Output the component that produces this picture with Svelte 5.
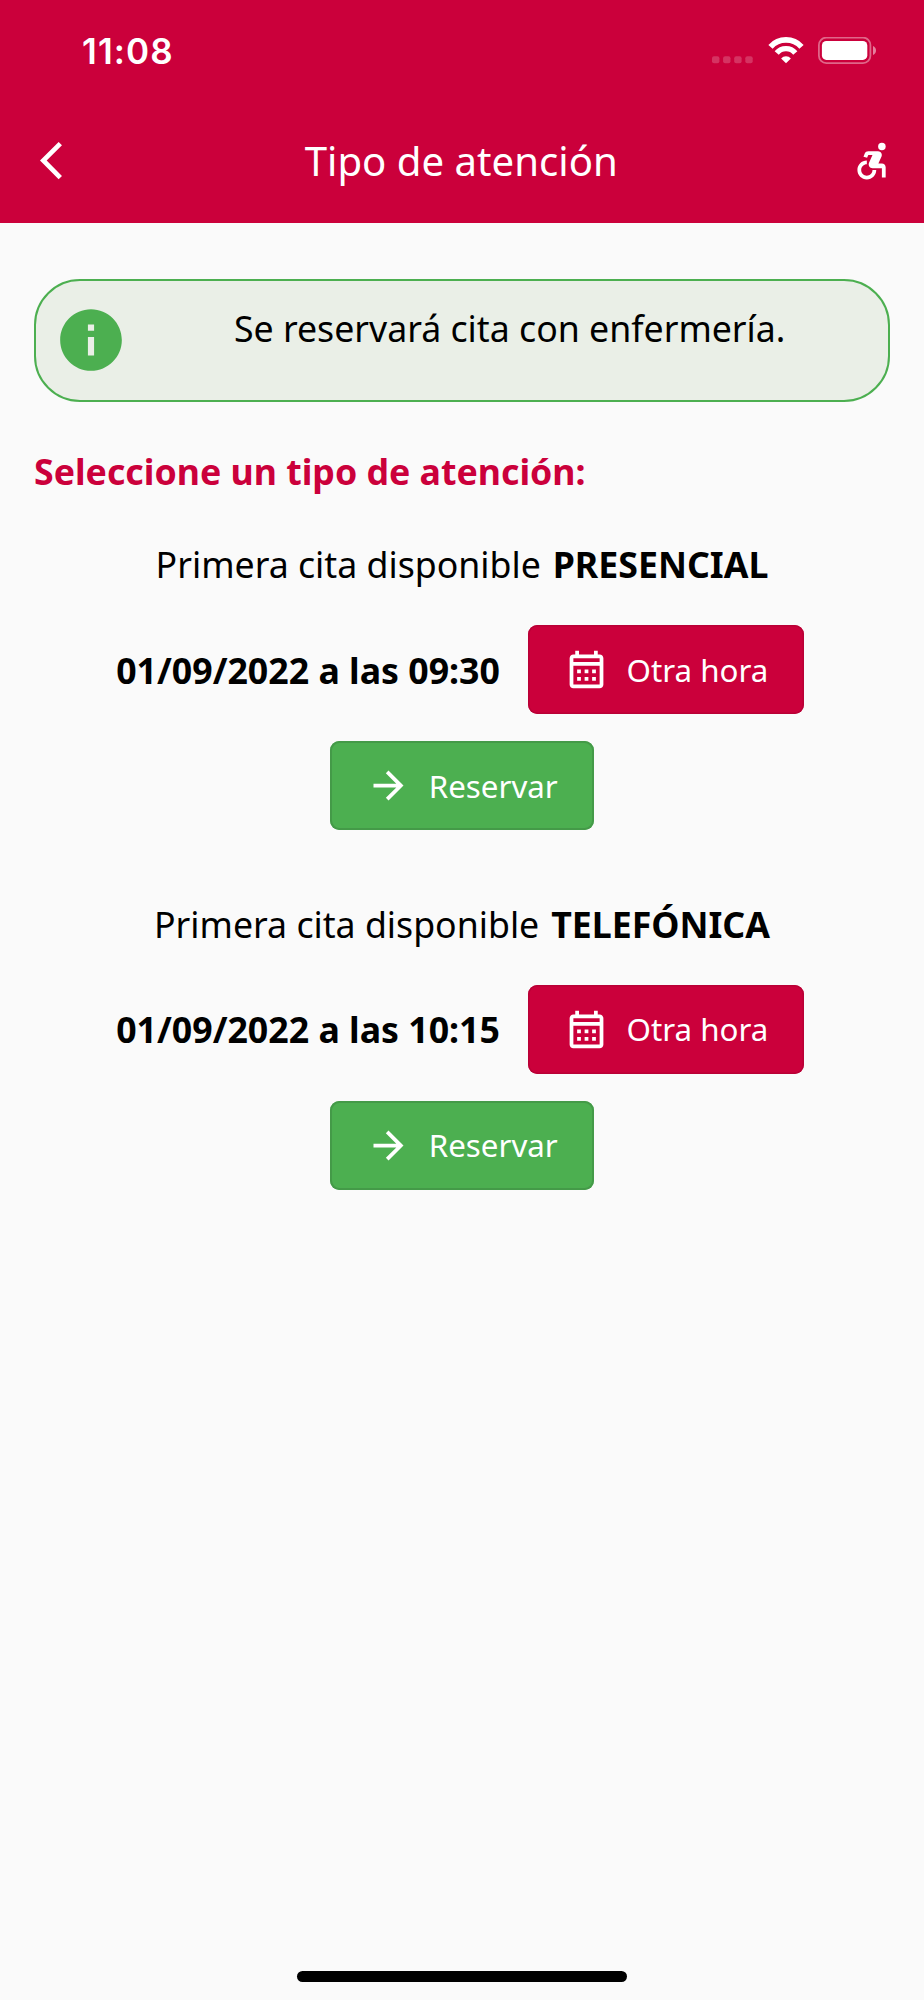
<script lang="ts">
  interface Appointment {
    type: string;
    date: string;
  }

  const appointments: Appointment[] = [
    { type: 'PRESENCIAL', date: '01/09/2022 a las 09:30' },
    { type: 'TELEFÓNICA', date: '01/09/2022 a las 10:15' }
  ];
</script>

<div class="screen">
  <header>
    <div class="status-bar">
      <span class="time">11:08</span>
      <div class="status-icons">
        <svg class="signal" width="41" height="8" viewBox="0 0 41 8" fill="#fff" fill-opacity="0.2">
          <rect x="0" y="0.2" width="7.4" height="7" rx="2" />
          <rect x="11.1" y="0.2" width="7.4" height="7" rx="2" />
          <rect x="22.2" y="0.2" width="7.4" height="7" rx="2" />
          <rect x="33.3" y="0.2" width="7.4" height="7" rx="2" />
        </svg>
        <svg class="wifi" width="36" height="27" viewBox="0 0 36 27" fill="none" stroke="#fff">
          <path d="M2.5 9.8a20.8 20.8 0 0 1 31 0" stroke-width="5.7" />
          <path d="M8.7 15.9a12.2 12.2 0 0 1 18.6 0" stroke-width="5.4" />
          <path d="M18 26.3l-4.9-4.9a6.9 6.9 0 0 1 9.8 0z" fill="#fff" stroke="none" />
        </svg>
        <svg class="battery" width="59" height="28" viewBox="0 0 59 28">
          <rect x="0.9" y="0.6" width="51.5" height="25.5" rx="7.4" fill="none" stroke="#fff" stroke-opacity="0.4" stroke-width="1.8" />
          <rect x="3.9" y="3.9" width="45.4" height="19" rx="4.5" fill="#fff" />
          <path d="M55 8.9v9c1.8-.7 3-2.5 3-4.5s-1.2-3.8-3-4.5z" fill="#fff" fill-opacity="0.5" />
        </svg>
      </div>
    </div>
    <nav class="toolbar">
      <button class="icon-button" aria-label="Volver">
        <svg width="45.2" height="45.2" viewBox="0 0 24 24" fill="currentColor">
          <path d="M11.67 3.87L9.9 2.1 0 12l9.9 9.9 1.77-1.77L3.54 12z" />
        </svg>
      </button>
      <h1>Tipo de atención</h1>
      <button class="icon-button" aria-label="Accesibilidad">
        <svg width="45.2" height="45.2" viewBox="0 0 24 24" fill="currentColor">
          <circle cx="18" cy="4.54" r="2" />
          <path d="M15 17h-2c0 1.65-1.35 3-3 3s-3-1.35-3-3 1.35-3 3-3v-2c-2.76 0-5 2.24-5 5s2.24 5 5 5 5-2.24 5-5zm3-3.5h-1.86l1.67-3.67C18.42 8.5 17.44 7 15.96 7h-5.2c-.81 0-1.54.47-1.87 1.2L8.22 10l1.92.53.65-1.53H13l-1.83 4.1c-.6 1.33.39 2.9 1.85 2.9H18v5h2v-5.5c0-1.1-.9-2-2-2z" />
        </svg>
      </button>
    </nav>
  </header>

  <main>
    <div class="notice">
      <svg width="74" height="74" viewBox="0 0 24 24" fill="currentColor">
        <path d="M12 2C6.48 2 2 6.48 2 12s4.48 10 10 10 10-4.48 10-10S17.52 2 12 2zm1 15h-2v-6h2v6zm0-8h-2V7h2v2z" />
      </svg>
      <p>Se reservará cita con enfermería.</p>
    </div>

    <h2>Seleccione un tipo de atención:</h2>

    {#each appointments as { type, date }}
      <section class="appointment">
        <p class="available">Primera cita disponible <strong>{type}</strong></p>
        <div class="slot">
          <strong>{date}</strong>
          <button class="button other">
            <svg width="45" height="45" viewBox="0 0 24 24" fill="currentColor">
              <path d="M19 4h-1V2h-2v2H8V2H6v2H5c-1.11 0-1.99.9-1.99 2L3 20c0 1.1.89 2 2 2h14c1.1 0 2-.9 2-2V6c0-1.1-.9-2-2-2zm0 16H5V10h14v10zm0-12H5V6h14v2zM9 14H7v-2h2v2zm4 0h-2v-2h2v2zm4 0h-2v-2h2v2zm-8 4H7v-2h2v2zm4 0h-2v-2h2v2zm4 0h-2v-2h2v2z" />
            </svg>
            <span>Otra hora</span>
          </button>
        </div>
        <button class="button book">
          <svg width="45" height="45" viewBox="0 0 24 24" fill="currentColor">
            <path d="M12 4l-1.41 1.41L16.17 11H4v2h12.17l-5.58 5.59L12 20l8-8z" />
          </svg>
          <span>Reservar</span>
        </button>
      </section>
    {/each}
  </main>

  <div class="home-indicator"></div>
</div>

<style>
  :global(body) {
    margin: 0;
    background: #fafafa;
  }

  .screen {
    display: flex;
    flex-direction: column;
    box-sizing: border-box;
    width: 924px;
    height: 2000px;
    background: #fafafa;
    color: #000;
    font-family: 'Noto Sans', sans-serif;
    font-size: 35.7px;
    line-height: 48px;
  }

  h1,
  h2,
  p {
    margin: 0;
  }

  svg {
    display: block;
    flex: none;
  }

  button {
    border: 0;
    padding: 0;
    color: #fff;
    font: inherit;
  }

  header {
    height: 223.4px;
    background: #cb003b;
    color: #fff;
  }

  .status-bar {
    display: flex;
    justify-content: space-between;
    box-sizing: border-box;
    height: 98px;
    padding: 27px 47px 0 82px;
  }

  .time {
    font-family: Inter, sans-serif;
    font-size: 35px;
    font-weight: 600;
    letter-spacing: 1.1px;
  }

  .status-icons {
    display: flex;
    padding-top: 10px;
  }

  .signal {
    margin: 19px 14.5px 0 0;
  }

  .wifi {
    margin-right: 14.5px;
  }

  .toolbar {
    display: grid;
    grid-template-columns: 45.2px 1fr 45.2px;
    align-items: center;
    height: 125.4px;
    padding: 0 31px 0 40px;
  }

  .icon-button {
    background: none;
  }

  h1 {
    padding-right: 10.5px;
    font-size: 40.15px;
    font-weight: 400;
    text-align: center;
  }

  main {
    flex: 1;
    padding: 55.9px 34px 0;
  }

  .notice {
    display: flex;
    box-sizing: border-box;
    height: 123px;
    padding: 22px 18px 0;
    border: 2.4px solid #4caf50;
    border-radius: 46px;
    background: #eaefe7;
  }

  .notice svg {
    color: #4caf50;
    margin-left: 0.3px;
  }

  .notice p {
    flex: 1;
    padding: 0.6px 0 0 21px;
    text-align: center;
  }

  h2 {
    margin-top: 45px;
    color: #cb003b;
    font-size: 35.7px;
    font-weight: 700;
  }

  .appointment {
    display: flex;
    flex-direction: column;
    align-items: center;
    height: 359.3px;
  }

  .available {
    margin-top: 45px;
  }

  .available strong {
    margin-left: 2.6px;
  }

  .slot {
    display: flex;
    align-items: center;
    gap: 28px;
    margin: 37px 0 27px;
    padding-right: 3.5px;
  }

  .button {
    display: flex;
    align-items: center;
    gap: 17.5px;
    box-sizing: border-box;
    height: 89px;
    padding: 0 36px;
    border-radius: 9.5px;
    font-size: 31.3px;
  }

  .other {
    background: #cb003b;
    box-shadow: inset 0 0 0 1.5px #b90036;
  }

  .book {
    background: #4caf50;
    box-shadow: inset 0 0 0 2px #449a48;
  }

  .home-indicator {
    align-self: center;
    width: 330px;
    height: 11px;
    margin-bottom: 18px;
    border-radius: 6px;
    background: #000;
  }
</style>
